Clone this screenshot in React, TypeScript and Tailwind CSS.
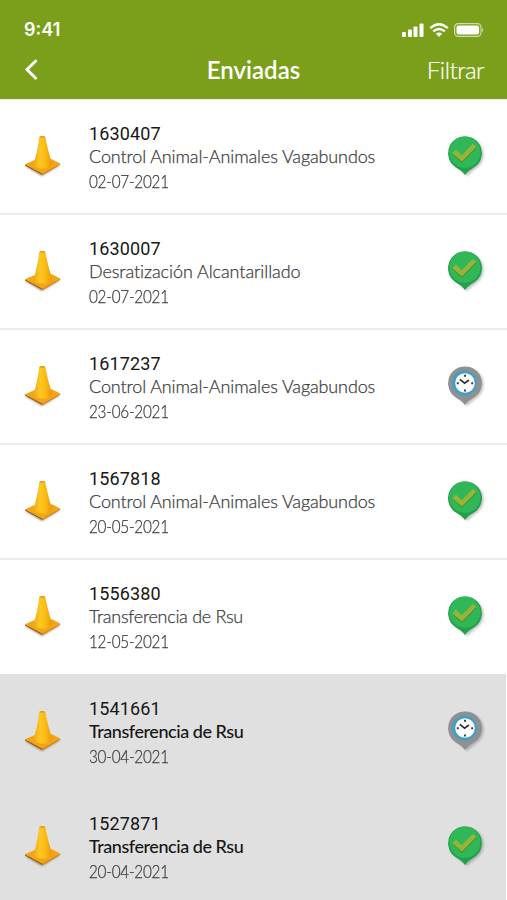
type Status = 'done' | 'pending';

interface Report {
  id: string;
  title: string;
  date: string;
  status: Status;
  unread?: boolean;
  titleSpacing: string;
}

const reports: Report[] = [
  { id: '1630407', title: 'Control Animal-Animales Vagabundos', date: '02-07-2021', status: 'done', titleSpacing: 'tracking-[-0.12px]' },
  { id: '1630007', title: 'Desratización Alcantarillado', date: '02-07-2021', status: 'done', titleSpacing: 'tracking-[-0.07px]' },
  { id: '1617237', title: 'Control Animal-Animales Vagabundos', date: '23-06-2021', status: 'pending', titleSpacing: 'tracking-[-0.12px]' },
  { id: '1567818', title: 'Control Animal-Animales Vagabundos', date: '20-05-2021', status: 'done', titleSpacing: 'tracking-[-0.12px]' },
  { id: '1556380', title: 'Transferencia de Rsu', date: '12-05-2021', status: 'done', titleSpacing: 'tracking-[-0.28px]' },
  { id: '1541661', title: 'Transferencia de Rsu', date: '30-04-2021', status: 'pending', unread: true, titleSpacing: 'tracking-[-0.45px]' },
  { id: '1527871', title: 'Transferencia de Rsu', date: '20-04-2021', status: 'done', unread: true, titleSpacing: 'tracking-[-0.45px]' },
];

function Cone() {
  return (
    <svg viewBox="0 0 40 44" className="h-[44px] w-[40px]">
      <defs>
        <linearGradient id="coneBody" x1="0" x2="1">
          <stop offset="0" stopColor="#efa914" />
          <stop offset=".35" stopColor="#fcc824" />
          <stop offset=".65" stopColor="#fbb912" />
          <stop offset="1" stopColor="#e8960a" />
        </linearGradient>
        <filter id="coneShadow" x="-20%" y="-20%" width="140%" height="140%">
          <feGaussianBlur stdDeviation=".8" />
        </filter>
      </defs>
      <path d="M2 32L19 42L37 31L20 28Z" fill="#5c4220" opacity=".6" filter="url(#coneShadow)" />
      <path d="M2 30.3L19.5 39.7V41L2 31.6Z" fill="#8f5710" />
      <path d="M19.5 39.7L37.2 29.6V30.8L19.5 41Z" fill="#d98208" />
      <path d="M2 30.3L11 26.3L29 25.3L37.2 29.6L19.5 39.8Z" fill="#f5a413" />
      <path d="M16.2 3Q19.2 1.1 22.4 3Q24.2 14 29 29.5C28.6 36.4 11.2 36.4 10.8 29.8Q15.2 14 16.2 3Z" fill="url(#coneBody)" />
      <ellipse cx="19.3" cy="2.9" rx="2.9" ry=".9" fill="#dca020" />
    </svg>
  );
}

function StatusPin({ status }: { status: Status }) {
  const done = status === 'done';
  return (
    <svg viewBox="0 0 42 46" className="h-[46px] w-[42px]">
      <defs>
        <filter id="pinShadow" x="-20%" y="-20%" width="150%" height="150%">
          <feGaussianBlur stdDeviation="1.1" />
        </filter>
      </defs>
      <path d="M21.5 4a16.5 16.5 0 0 1 9.5 30.5L22 42L13 34.5A16.5 16.5 0 0 1 21.5 4Z" fill="#444" opacity=".3" filter="url(#pinShadow)" />
      <path
        d="M20 2.5a16.8 16.8 0 0 1 9 31.1C26 35.5 22.5 37.5 20 41C17.5 37.5 14 35.5 11 33.6A16.8 16.8 0 0 1 20 2.5Z"
        fill={done ? '#22a04b' : '#8e9091'}
      />
      {done ? (
        <>
          <circle cx="19.8" cy="18.2" r="15.6" fill="#30b858" />
          <path d="M7.2 20L11 16.4L16.8 22L28 10.6L31.6 14L17 29Z" fill="#4c8f2c" />
          <path d="M7.2 19.2L10.8 15.6L16.8 21.2L28 9.8L31.2 13L17 27.4Z" fill="#95b43a" />
        </>
      ) : (
        <>
          <circle cx="19.6" cy="19" r="12.4" fill="#419fc6" />
          <circle cx="20" cy="19" r="9.8" fill="#fff" />
          <path d="M14.8 15.3L19.6 19.2L24 16" fill="none" stroke="#303030" strokeWidth="1.7" />
          <path d="M20 10.7v2M20 25.5v2M11.8 19.2h2M26.2 19.2h2" stroke="#3e3e3e" strokeWidth="2" />
        </>
      )}
    </svg>
  );
}

function Header() {
  return (
    <header className="h-[99px] bg-[#7b9f1b] px-6 text-white">
      <div className="flex h-[46px] items-end justify-between pb-[6px]">
        <span className="font-['Inter',sans-serif] text-[18px] leading-[21px] font-semibold">9:41</span>
        <svg viewBox="0 0 84 16" className="-mr-[1px] mb-[2px] h-[16px] w-[84px]" fill="#fff">
          <rect x="2" y="10" width="4" height="5" rx="1" />
          <rect x="8" y="7.5" width="4" height="7.5" rx="1" />
          <rect x="13.5" y="4.5" width="4" height="10.5" rx="1" />
          <rect x="19.5" y="1.5" width="4" height="13.5" rx="1" />
          <g fill="none" stroke="#fff" strokeWidth="2.3">
            <path d="M30.2 6.2Q39 -1.7 47.8 6.2" />
            <path d="M33.2 9.4Q39 4.5 44.8 9.4" />
          </g>
          <path d="M35.8 11.6Q39 9.2 42.2 11.6L39 15Z" />
          <rect x="54.6" y="1.6" width="26.4" height="12.8" rx="3.6" fill="none" stroke="#fff" strokeOpacity=".65" strokeWidth="1.2" />
          <rect x="56.5" y="3.5" width="22.6" height="9" rx="2" />
          <path d="M82.2 5.7q2 2.3 0 4.6Z" opacity=".7" />
        </svg>
      </div>
      <div className="grid h-[48px] grid-cols-3 items-center font-['Lato',sans-serif] text-[24px] leading-[30px]">
        <button aria-label="Volver" className="w-4">
          <svg viewBox="0 0 16 22" className="h-[22px] w-[16px]" fill="none" stroke="#fff" strokeWidth="3">
            <path d="M12.5 1.2L3 10.5L12.5 20" />
          </svg>
        </button>
        <h1 className="text-center font-semibold">Enviadas</h1>
        <button className="-mr-px text-right font-light tracking-[-0.5px] [-webkit-text-stroke:0.2px_white]">Filtrar</button>
      </div>
    </header>
  );
}

function ReportRow({ report }: { report: Report }) {
  return (
    <li
      className={`flex h-[115px] items-start border-[#e9e9e9] pr-[20px] pl-[23px] ${
        report.unread ? 'mr-px bg-[#e0e0e0]' : 'bg-white shadow-[inset_0_1px_#ececec]'
      }`}
    >
      <div className="mt-[35px] w-[40px]"><Cone /></div>
      <div className="ml-[26px] flex-1 whitespace-nowrap font-['Lato',sans-serif] text-[18px] text-[#3c3c3c]">
        <p className="mt-[24px] font-['Roboto',sans-serif] leading-[22px] tracking-[0.15px] text-[#171717]">{report.id}</p>
        <p className={`-mt-px leading-[24px] ${report.titleSpacing} ${report.unread ? 'font-medium text-[#151515]' : 'font-light [-webkit-text-stroke:0.25px_#3c3c3c]'}`}>{report.title}</p>
        <p className="mt-px origin-left scale-x-[0.85] leading-[25px] font-light tracking-[-0.3px] [-webkit-text-stroke:0.25px_#3c3c3c]">{report.date}</p>
      </div>
      <div className={`mt-[35px] w-[42px] ${report.unread ? '-mr-px' : ''}`}><StatusPin status={report.status} /></div>
    </li>
  );
}

export default function App() {
  return (
    <main className="h-[900px] w-[507px] overflow-hidden bg-white">
      <Header />
      <ul>
        {reports.map((report, index) => (
          <div key={report.id} className={index < 4 ? 'shadow-[0_-1px_#ececec] first:shadow-none' : index === 4 ? 'shadow-[0_-1px_#ececec]' : ''}>
            <ReportRow report={report} />
          </div>
        ))}
      </ul>
    </main>
  );
}
